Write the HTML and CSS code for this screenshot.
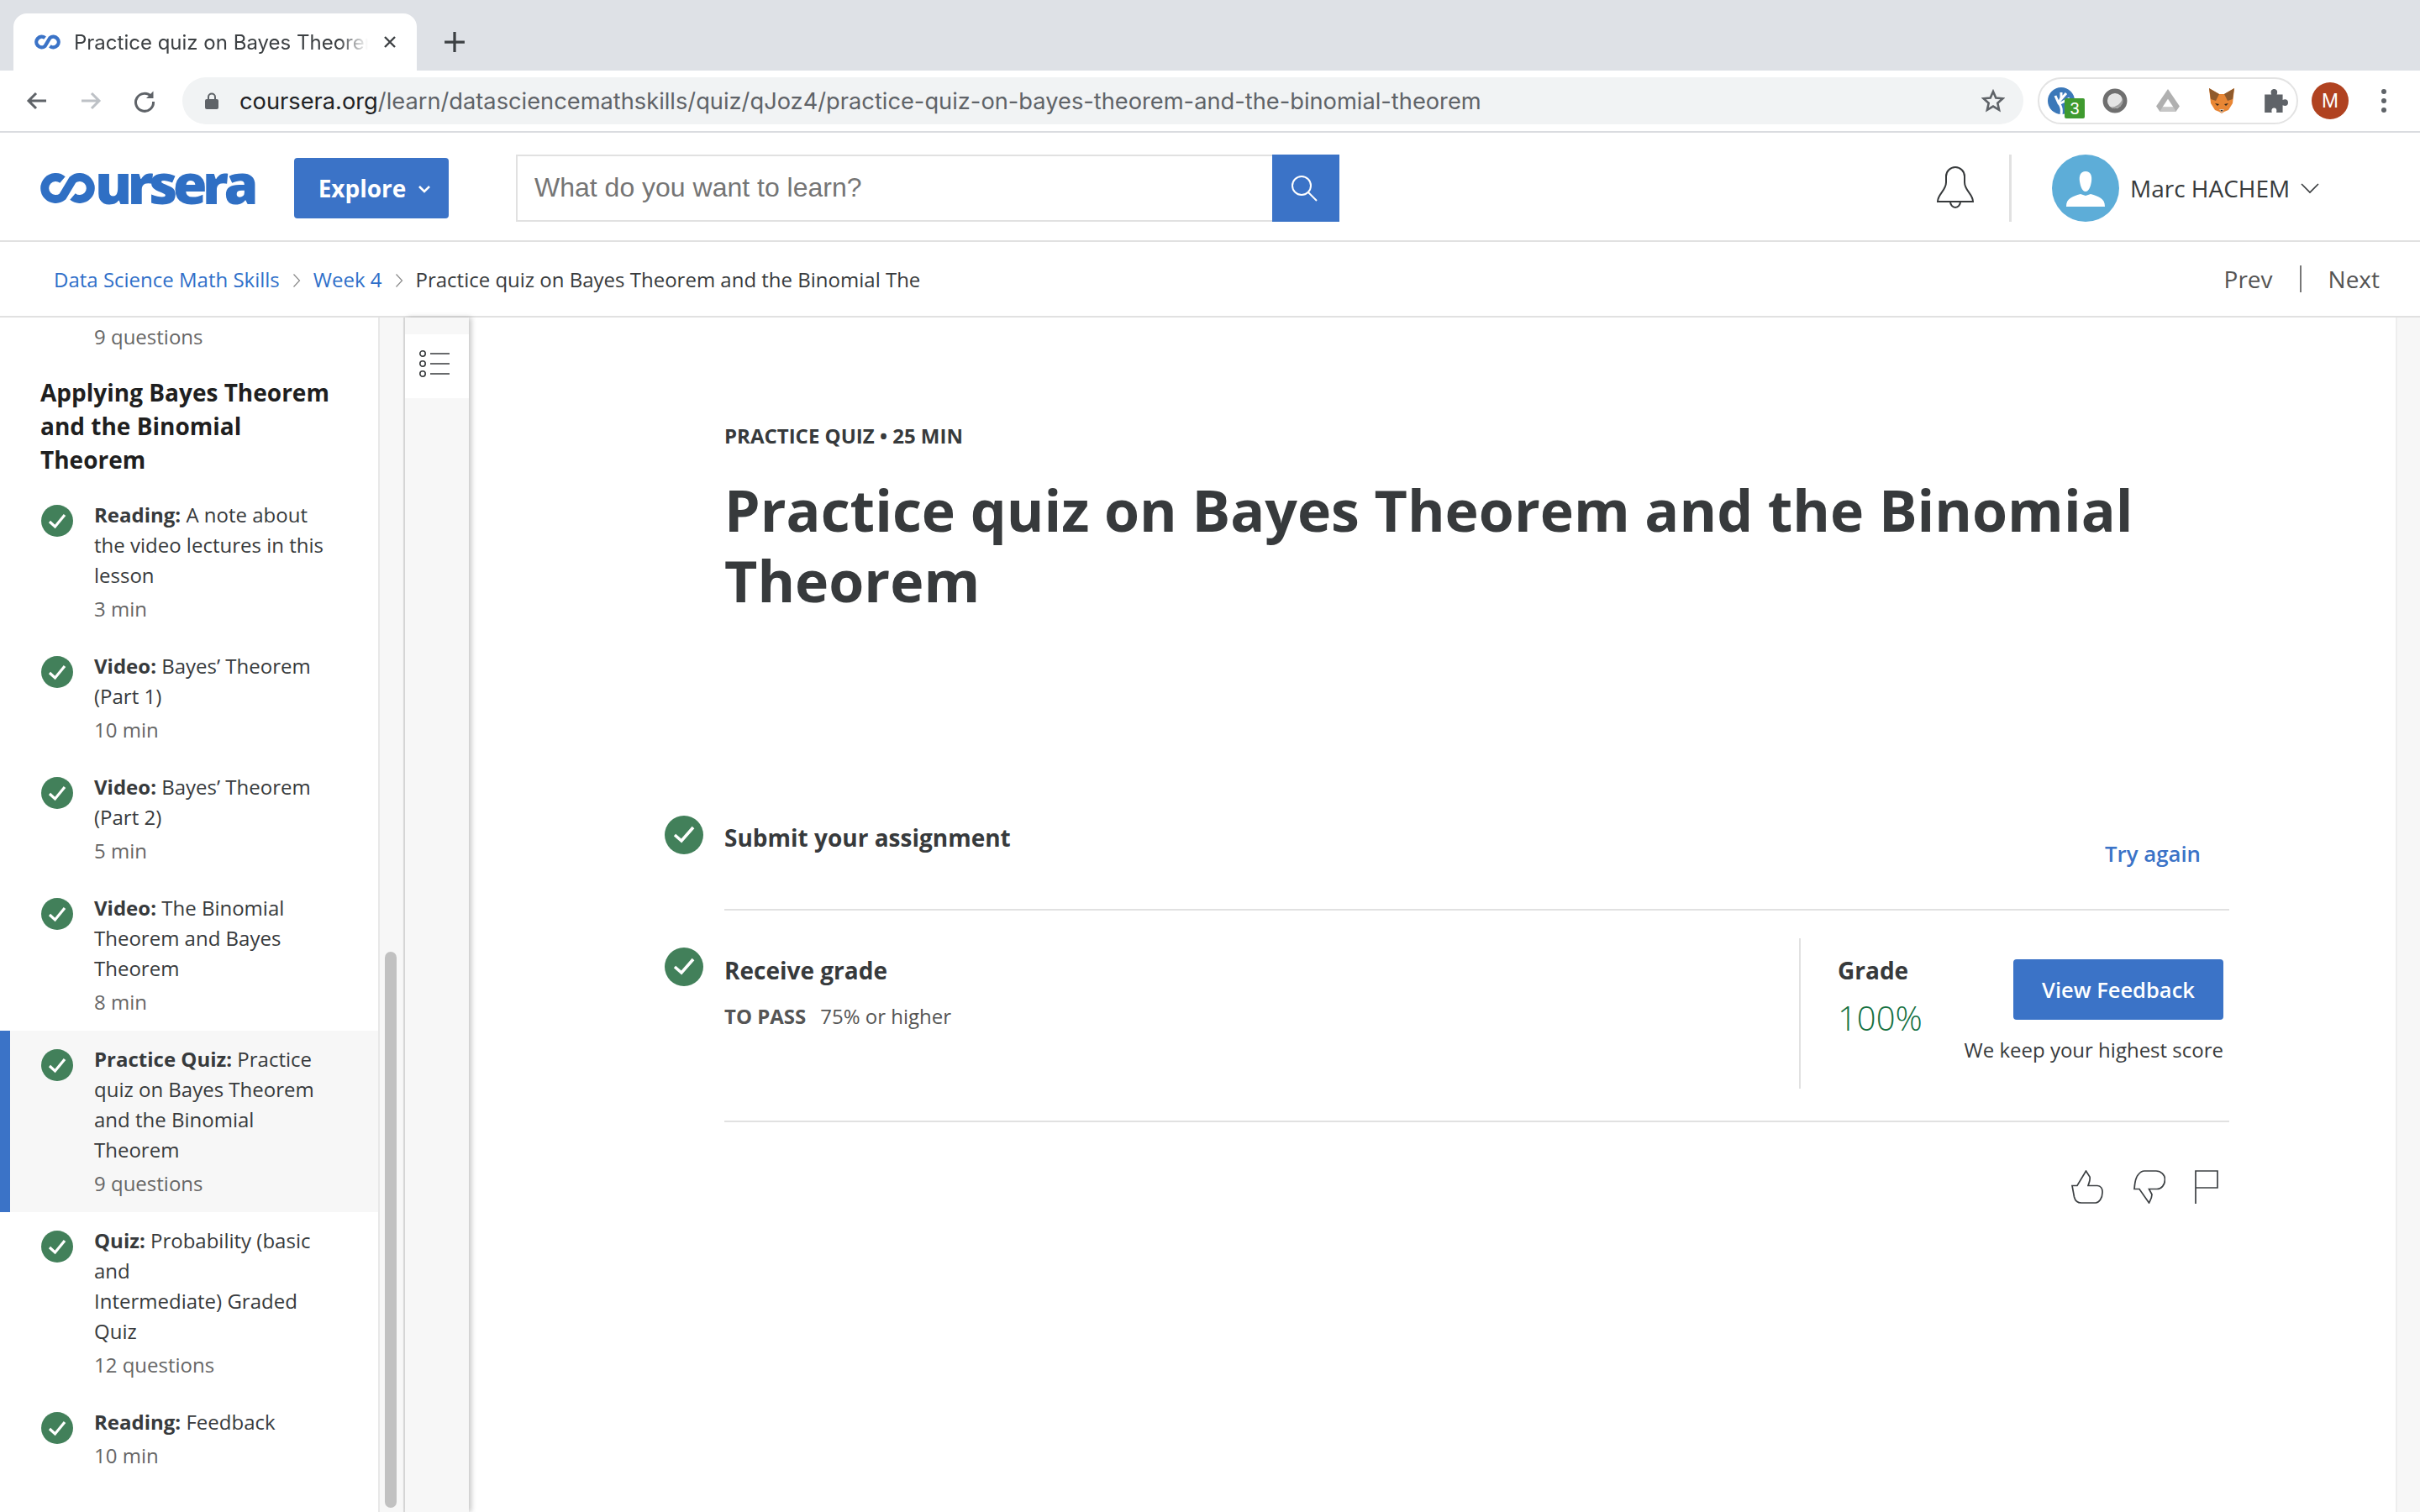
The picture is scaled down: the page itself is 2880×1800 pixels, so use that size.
FILE: index.html
```html
<!DOCTYPE html>
<html lang="en">
<head>
  <meta charset="UTF-8">
  <title>Practice quiz on Bayes Theorem and the Binomial Theorem</title>
  <link rel="stylesheet" href="styles.css">
</head>
<body>
  <div class="tabstrip">
    <div class="tab">
      <svg class="favicon" viewBox="0 0 32 20"><path d="M13 5A6.5 6.5 0 1 0 13 15L19 5A6.5 6.5 0 1 1 19 15" fill="none" stroke="#3b73c7" stroke-width="4.4"/></svg>
      <span class="tab-title">Practice quiz on Bayes Theorem and the</span>
      <svg class="tab-close" viewBox="0 0 16 16"><path d="M2 2L14 14M14 2L2 14" stroke="#3c4043" stroke-width="2.4"/></svg>
    </div>
    <svg class="newtab" viewBox="0 0 24 24"><path d="M12 1V23M1 12H23" stroke="#3c4043" stroke-width="3"/></svg>
  </div>

  <div class="toolbar">
    <svg class="nav-icon" viewBox="0 0 28 28"><path d="M25 14H4M13 5L4 14L13 23" fill="none" stroke="#5f6368" stroke-width="3"/></svg>
    <svg class="nav-icon" viewBox="0 0 28 28"><path d="M3 14H24M15 5L24 14L15 23" fill="none" stroke="#bdc1c6" stroke-width="3"/></svg>
    <svg class="nav-icon" viewBox="0 0 28 28"><path d="M22 9A10.5 10.5 0 1 0 24.5 15" fill="none" stroke="#5f6368" stroke-width="3"/><path d="M24.5 2.5V11H16Z" fill="#5f6368"/></svg>
    <div class="omnibox">
      <svg class="lock" viewBox="0 0 16 20"><path d="M4 8V5.5A4 4 0 0 1 12 5.5V8" fill="none" stroke="#5f6368" stroke-width="2"/><rect x="0" y="8" width="16" height="12" rx="2" fill="#5f6368"/></svg>
      <span class="url"><span class="url-host">coursera.org</span>/learn/datasciencemathskills/quiz/qJoz4/practice-quiz-on-bayes-theorem-and-the-binomial-theorem</span>
      <svg class="star" viewBox="0 0 28 28"><path d="M14 3L17.3 10.6L25.5 11.3L19.3 16.8L21.1 24.8L14 20.6L6.9 24.8L8.7 16.8L2.5 11.3L10.7 10.6Z" fill="none" stroke="#5f6368" stroke-width="2.6"/></svg>
    </div>
    <div class="extensions">
      <div class="ext ext-tree">
        <svg viewBox="0 0 32 32"><circle cx="16" cy="16" r="16" fill="#3b78b9"/><path d="M16 32C17 26 16 22 13 19L9 10M13 19L16 12L16 6M15 15L22 7M15 19L26 13" stroke="#fff" stroke-width="3" fill="none"/></svg>
        <span class="ext-badge">3</span>
      </div>
      <div class="ext">
        <svg viewBox="0 0 28 28"><circle cx="14" cy="14" r="11" fill="#e4e4e4" stroke="#6f6f6f" stroke-width="5"/><path d="M9 21A9 9 0 0 0 22.5 11A13 13 0 0 1 9 21Z" fill="#a0a0a0"/></svg>
      </div>
      <div class="ext">
        <svg viewBox="0 0 28 28"><path d="M14 1L27 20L23 26H5L1 20Z" fill="#b0b0b0"/><path d="M14 12L20 21H8Z" fill="#fff"/><path d="M8 21H20L23 26H5Z" fill="#c6c6c6"/></svg>
      </div>
      <div class="ext ext-fox">
        <svg viewBox="0 0 32 32"><path d="M1 1L13 8H19L31 1L29 19L24 27L19 29L16 31L13 29L8 27L3 19Z" fill="#e88634"/><path d="M1 1L13 8L9 16L3 14ZM31 1L19 8L23 16L29 14Z" fill="#8f5a2c"/><path d="M13 26H19L16 31Z" fill="#d9c3ae"/><path d="M14.5 27H17.5L16 29Z" fill="#222"/><path d="M8 19L13 20L11 22ZM24 19L19 20L21 22Z" fill="#3a2a1c"/></svg>
      </div>
      <div class="ext">
        <svg viewBox="0 0 28 28"><path d="M2 7H9.5C8 3 10 1 12.5 1S17 3 15.5 7H22V13C26 11.5 28 13.5 28 16S26 20.500 22 19V27H15C16 23 14 22 12.500 22S9 23 10 27H2Z" fill="#5f6368"/></svg>
      </div>
    </div>
    <div class="profile-m">M</div>
    <div class="chrome-menu"><i></i><i></i><i></i></div>
  </div>

  <header class="site-header">
    <div class="logo">
      <svg class="logo-co" viewBox="0 0 65 36"><path d="M26.500 8A13 13 0 1 0 26.500 28L38.500 8A13 13 0 1 1 38.500 28" fill="none" stroke="#2f6fc4" stroke-width="10"/></svg>
      <span class="logo-rest">ursera</span>
    </div>
    <button class="explore">Explore <svg viewBox="0 0 16 10"><path d="M2 2L8 8L14 2" fill="none" stroke="#fff" stroke-width="2.6"/></svg></button>
    <div class="search">
      <div class="search-input">What do you want to learn?</div>
      <div class="search-btn"><svg viewBox="0 0 34 34"><circle cx="14" cy="14" r="11" fill="none" stroke="#fff" stroke-width="2"/><path d="M22 22L32 32" stroke="#fff" stroke-width="2"/></svg></div>
    </div>
    <svg class="bell" viewBox="0 0 46 54"><path d="M2 43C2 34 12 30 12 20V13A11 11 0 0 1 34 13V20C34 30 44 34 44 43ZM17 43A6 7 0 0 0 29 43" fill="none" stroke="#373a3c" stroke-width="2"/></svg>
    <div class="header-divider"></div>
    <div class="user-avatar"><svg viewBox="0 0 80 80"><path d="M40 20C46 20 48 25 47 32C46 38 44 44 40 44C36 44 34 38 33 32C32 25 34 20 40 20ZM17 62C17 52 24 50 34 47L40 49L46 47C56 50 63 52 63 62Z" fill="#fff"/></svg></div>
    <span class="user-name">Marc HACHEM</span>
    <svg class="user-chevron" viewBox="0 0 24 14"><path d="M2 2L12 12L22 2" fill="none" stroke="#373a3c" stroke-width="1.6"/></svg>
  </header>

  <nav class="crumbs">
    <a class="crumb-link">Data Science Math Skills</a>
    <svg class="crumb-sep" viewBox="0 0 10 18"><path d="M1.5 1.5L8.5 9L1.5 16.5" fill="none" stroke="#8a8a8a" stroke-width="1.2"/></svg>
    <a class="crumb-link">Week 4</a>
    <svg class="crumb-sep" viewBox="0 0 10 18"><path d="M1.5 1.5L8.5 9L1.5 16.5" fill="none" stroke="#8a8a8a" stroke-width="1.2"/></svg>
    <span class="crumb-current">Practice quiz on Bayes Theorem and the Binomial The</span>
    <div class="pager">
      <span>Prev</span>
      <i class="pager-sep"></i>
      <span>Next</span>
    </div>
  </nav>

  <div class="learn">
    <aside class="sidebar">
      <div class="meta meta-top">9 questions</div>
      <h3 class="lesson-title">Applying Bayes Theorem and the Binomial Theorem</h3>

      <div class="item">
        <svg class="check" viewBox="0 0 38 38"><circle cx="19" cy="19" r="19" fill="#42805a"/><path d="M10 20L16.5 26L28 12" fill="none" stroke="#fff" stroke-width="3.2"/></svg>
        <div class="item-text"><b>Reading:</b> A note about the video lectures in this lesson<div class="meta">3 min</div></div>
      </div>
      <div class="item">
        <svg class="check" viewBox="0 0 38 38"><circle cx="19" cy="19" r="19" fill="#42805a"/><path d="M10 20L16.5 26L28 12" fill="none" stroke="#fff" stroke-width="3.2"/></svg>
        <div class="item-text"><b>Video:</b> Bayes’ Theorem (Part 1)<div class="meta">10 min</div></div>
      </div>
      <div class="item">
        <svg class="check" viewBox="0 0 38 38"><circle cx="19" cy="19" r="19" fill="#42805a"/><path d="M10 20L16.5 26L28 12" fill="none" stroke="#fff" stroke-width="3.2"/></svg>
        <div class="item-text"><b>Video:</b> Bayes’ Theorem (Part 2)<div class="meta">5 min</div></div>
      </div>
      <div class="item">
        <svg class="check" viewBox="0 0 38 38"><circle cx="19" cy="19" r="19" fill="#42805a"/><path d="M10 20L16.5 26L28 12" fill="none" stroke="#fff" stroke-width="3.2"/></svg>
        <div class="item-text"><b>Video:</b> The Binomial Theorem and Bayes Theorem<div class="meta">8 min</div></div>
      </div>
      <div class="item item-active">
        <svg class="check" viewBox="0 0 38 38"><circle cx="19" cy="19" r="19" fill="#42805a"/><path d="M10 20L16.5 26L28 12" fill="none" stroke="#fff" stroke-width="3.2"/></svg>
        <div class="item-text"><b>Practice Quiz:</b> Practice quiz on Bayes Theorem and the Binomial Theorem<div class="meta">9 questions</div></div>
      </div>
      <div class="item">
        <svg class="check" viewBox="0 0 38 38"><circle cx="19" cy="19" r="19" fill="#42805a"/><path d="M10 20L16.5 26L28 12" fill="none" stroke="#fff" stroke-width="3.2"/></svg>
        <div class="item-text"><b>Quiz:</b> Probability (basic and<br>Intermediate) Graded Quiz<div class="meta">12 questions</div></div>
      </div>
      <div class="item">
        <svg class="check" viewBox="0 0 38 38"><circle cx="19" cy="19" r="19" fill="#42805a"/><path d="M10 20L16.5 26L28 12" fill="none" stroke="#fff" stroke-width="3.2"/></svg>
        <div class="item-text"><b>Reading:</b> Feedback<div class="meta">10 min</div></div>
      </div>
    </aside>

    <div class="side-scroll"><div class="side-thumb"></div></div>

    <div class="rail">
      <div class="rail-btn">
        <svg viewBox="0 0 36 32"><g fill="none" stroke="#373a3c" stroke-width="1.6"><circle cx="4" cy="4" r="3.2"/><circle cx="4" cy="16" r="3.2"/><circle cx="4" cy="28" r="3.2"/><path d="M13 4H36M13 16H36M13 28H36"/></g></svg>
      </div>
    </div>

    <main class="content">
      <div class="eyebrow">PRACTICE QUIZ • 25 MIN</div>
      <h1 class="quiz-title">Practice quiz on Bayes Theorem and the Binomial Theorem</h1>

      <div class="steps">
        <div class="step">
          <svg class="step-check" viewBox="0 0 46 46"><circle cx="23" cy="23" r="23" fill="#42805a"/><path d="M12 23L20 30L34 14" fill="none" stroke="#fff" stroke-width="3.6"/></svg>
          <div class="step-body step-submit">
            <div class="step-title">Submit your assignment</div>
            <a class="try-again">Try again</a>
          </div>
        </div>
        <div class="step">
          <svg class="step-check step-check-grade" viewBox="0 0 46 46"><circle cx="23" cy="23" r="23" fill="#42805a"/><path d="M12 23L20 30L34 14" fill="none" stroke="#fff" stroke-width="3.6"/></svg>
          <div class="step-body step-grade">
            <div class="grade-left">
              <div class="step-title">Receive grade</div>
              <div class="pass"><b>TO PASS</b><span>75% or higher</span></div>
            </div>
            <div class="grade-box">
              <div class="grade-col">
                <div class="step-title">Grade</div>
                <div class="grade-value">100%</div>
              </div>
              <div class="feedback-col">
                <button class="view-feedback">View Feedback</button>
                <div class="keep">We keep your highest score</div>
              </div>
            </div>
          </div>
        </div>
      </div>

      <div class="rating">
        <svg class="thumb-up" viewBox="0 0 38 40"><path d="M1 18.500H7L17.500 1L22 8C23 12 21 15 20 18.500H31C35 18.500 37.500 22 37 27C37 33 33 39 29 39H12C7 39 4.500 36 3.500 32Z" fill="none" stroke="#3c4043" stroke-width="1.7"/></svg>
        <svg class="thumb-down" viewBox="0 0 38 40"><path d="M1 22.500C1.500 15 3 8 6 5C8 2.500 10 1 13 1H27C33 1 37.500 6 37.500 11C37.500 18 33 22.500 28 22.500H18.500L22 29C22 33 20 36 18.500 39L7 22.500Z" fill="none" stroke="#3c4043" stroke-width="1.7"/></svg>
        <svg class="flag" viewBox="0 0 28 40"><path d="M1 40V1H27V21H1" fill="none" stroke="#3c4043" stroke-width="1.7"/></svg>
      </div>
    </main>

    <div class="page-scroll"></div>
  </div>
</body>
</html>
```

FILE: styles.css
```css
* {
  box-sizing: border-box;
}
body {
  margin: 0;
  width: 2880px;
  height: 1800px;
  overflow: hidden;
  background: white;
  font-family: "Open Sans", sans-serif;
  color: #373a3c;
  display: flex;
  flex-direction: column;
}
svg {
  display: block;
  flex: none;
}

/* browser chrome */
.tabstrip {
  height: 84px;
  background: #dee1e6;
  padding: 16px 0 0 16px;
  display: flex;
}
.tab {
  width: 480px;
  height: 68px;
  background: white;
  border-radius: 16px 16px 0 0;
  display: flex;
  align-items: center;
  padding: 0 20px 0 25px;
}
.favicon {
  width: 31px;
  height: 20px;
}
.tab-title {
  font-family: Inter, sans-serif;
  font-size: 24px;
  color: #3c4043;
  white-space: nowrap;
  overflow: hidden;
  width: 350px;
  margin-left: 16px;
  -webkit-mask-image: linear-gradient(to right, black 90%, transparent);
  mask-image: linear-gradient(to right, black 90%, transparent);
}
.tab-close {
  width: 16px;
  height: 16px;
  margin-left: 18px;
}
.newtab {
  width: 26px;
  height: 26px;
  margin: 21px 0 0 32px;
}
.toolbar {
  height: 74px;
  border-bottom: 2px solid #dadce0;
  display: flex;
  align-items: center;
  padding-left: 30px;
}
.nav-icon {
  width: 28px;
  height: 28px;
  margin-right: 36px;
}
.omnibox {
  width: 2191px;
  height: 56px;
  margin-left: -5px;
  background: #f1f3f4;
  border-radius: 28px;
  display: flex;
  align-items: center;
  padding-left: 27px;
}
.lock {
  width: 16px;
  height: 20px;
}
.url {
  font-family: Inter, sans-serif;
  font-size: 27.25px;
  color: #5f6368;
  margin-left: 25px;
  white-space: nowrap;
}
.url-host {
  color: #202124;
}
.star {
  width: 28px;
  height: 28px;
  margin-left: auto;
  margin-right: 22px;
}
.extensions {
  width: 310px;
  height: 56px;
  margin-left: 17px;
  border: 2px solid #e3e3e3;
  border-radius: 28px;
  display: flex;
  align-items: center;
  padding-left: 10px;
}
.ext {
  width: 32px;
  height: 32px;
  margin-right: 33px;
  position: relative;
  display: flex;
  align-items: center;
  justify-content: center;
}
.ext svg {
  width: 30px;
  height: 30px;
}
.ext-tree svg,
.ext-fox svg {
  width: 32px;
  height: 32px;
}
.ext-badge {
  position: absolute;
  left: 20px;
  top: 13px;
  width: 24px;
  height: 24px;
  background: #3f9a2f;
  border-radius: 2px;
  color: white;
  font: 20px/24px "Liberation Sans", sans-serif;
  text-align: center;
}
.profile-m {
  width: 44px;
  height: 44px;
  margin-left: 16px;
  border-radius: 50%;
  background: #b04220;
  color: white;
  font: 24px/44px "Liberation Sans", sans-serif;
  text-align: center;
}
.chrome-menu {
  margin-left: 39px;
  display: flex;
  flex-direction: column;
  gap: 5px;
}
.chrome-menu i {
  width: 6px;
  height: 6px;
  border-radius: 50%;
  background: #5f6368;
}

/* coursera header */
.site-header {
  height: 130px;
  border-bottom: 2px solid #e1e1e1;
  display: flex;
  align-items: center;
  padding: 3px 0 0 48px;
}
.logo {
  width: 254px;
  display: flex;
  align-items: center;
  color: #2f6fc4;
}
.logo-co {
  width: 65px;
  height: 36px;
}
.logo-rest {
  font-weight: 800;
  font-size: 66px;
  line-height: 36px;
  letter-spacing: -5.5px;
  padding-bottom: 14px;
}
.explore {
  width: 184px;
  height: 72px;
  margin-left: 48px;
  padding: 0 0 0 8px;
  border: none;
  border-radius: 4px;
  background: #3b73c7;
  color: white;
  font: 700 28px "Open Sans", sans-serif;
  display: flex;
  align-items: center;
  justify-content: center;
  gap: 14px;
}
.explore svg {
  width: 16px;
  height: 10px;
  margin-top: 3px;
}
.search {
  width: 980px;
  height: 80px;
  margin-left: 80px;
  display: flex;
}
.search-input {
  flex: 1;
  border: 2px solid #e1e1e1;
  border-right: none;
  padding-left: 20px;
  font: 32px/74px "Liberation Sans", sans-serif;
  color: #757575;
}
.search-btn {
  width: 80px;
  background: #3b73c7;
  display: flex;
  align-items: center;
  justify-content: center;
}
.search-btn svg {
  width: 34px;
  height: 34px;
  margin-left: -4px;
}
.bell {
  width: 46px;
  height: 54px;
  margin-left: 710px;
}
.header-divider {
  width: 3px;
  height: 80px;
  margin-left: 41px;
  background: #e1e1e1;
}
.user-avatar {
  width: 80px;
  height: 80px;
  margin-left: 48px;
  border-radius: 50%;
  background: #5dadd8;
}
.user-name {
  font-size: 28px;
  margin-left: 13px;
  white-space: nowrap;
}
.user-chevron {
  width: 24px;
  height: 14px;
  margin-left: 12px;
}

/* breadcrumbs */
.crumbs {
  height: 90px;
  border-bottom: 2px solid #e1e1e1;
  display: flex;
  align-items: center;
  padding: 0 48px 0 64px;
  font-size: 24px;
  white-space: nowrap;
}
.crumb-link {
  color: #2f6fc9;
}
.crumb-sep {
  width: 10px;
  height: 18px;
  margin: 3px 15px 0;
}
.pager {
  margin-left: auto;
  display: flex;
  align-items: center;
  font-size: 28px;
  color: #545454;
}
.pager-sep {
  width: 2px;
  height: 32px;
  margin: 0 32px;
  background: #777;
}

/* layout under the bars */
.learn {
  flex: 1;
  min-height: 0;
  display: flex;
}
.sidebar {
  width: 452px;
  border-right: 2px solid #e8e8e8;
  overflow: hidden;
  font-size: 24px;
  line-height: 36px;
}
.meta {
  color: #666;
  margin-top: 4px;
}
.meta-top {
  margin: 5px 0 0 112px;
}
.lesson-title {
  margin: 29px 40px 12px 48px;
  font-size: 28px;
  line-height: 39.8px;
  font-weight: 700;
  color: #1f1f1f;
}
.item {
  display: flex;
  padding: 16px 0 16px 49px;
}
.item-active {
  background: #f7f7f7;
  border-left: 12px solid #3b73c7;
  padding-left: 37px;
}
.check {
  width: 38px;
  height: 38px;
  margin: 6px 25px 0 0;
}
.item-text {
  width: 296px;
}
.side-scroll {
  width: 30px;
  background: #f7f7f7;
  padding: 755px 8px 5px 6px;
  border-right: 2px solid #dcdcdc;
  display: flex;
}
.side-thumb {
  flex: 1;
  background: #c1c1c1;
  border-radius: 8px;
}
.rail {
  width: 76px;
  background: #f7f7f7;
  padding-top: 20px;
  box-shadow: 3px 0 6px rgba(0, 0, 0, 0.22);
}
.rail-btn {
  height: 76px;
  background: white;
  padding: 19px 0 0 17px;
}
.rail-btn svg {
  width: 36px;
  height: 32px;
}

/* main column */
.content {
  flex: 1;
  padding: 125px 0 0 304px;
  min-width: 0;
}
.eyebrow {
  font-size: 24px;
  line-height: 32px;
  font-weight: 700;
}
.quiz-title {
  margin: 30px 0 0;
  width: 1791px;
  font-size: 68px;
  line-height: 84px;
  font-weight: 700;
}
.steps {
  margin: 238px 0 0 -71px;
}
.step {
  display: flex;
}
.step-check {
  width: 46px;
  height: 46px;
  margin-right: 25px;
}
.step-check-grade {
  margin-top: 44px;
}
.step-body {
  width: 1791px;
  border-bottom: 2px solid #e1e1e1;
}
.step-submit {
  height: 113px;
  display: flex;
  justify-content: space-between;
  padding: 6px 34px 0 0;
}
.step-title {
  font-size: 28px;
  line-height: 40px;
  font-weight: 700;
}
.try-again {
  margin-top: 21px;
  font-size: 25.8px;
  line-height: 36px;
  font-weight: 600;
  color: #3b73c7;
}
.step-grade {
  height: 252px;
  display: flex;
  justify-content: space-between;
  padding-right: 7px;
}
.grade-left {
  padding-top: 51px;
}
.pass {
  margin-top: 17px;
  font-size: 24px;
  line-height: 36px;
  color: #555;
  display: flex;
  gap: 17px;
}
.grade-box {
  width: 505px;
  height: 179px;
  margin-top: 33px;
  border-left: 2px solid #e1e1e1;
  padding-left: 44px;
  display: flex;
  justify-content: space-between;
}
.grade-col {
  padding-top: 18px;
}
.grade-value {
  margin-top: 9px;
  font-size: 40px;
  line-height: 56px;
  font-weight: 300;
  color: #14703f;
}
.feedback-col {
  padding-top: 25px;
  display: flex;
  flex-direction: column;
  align-items: flex-end;
}
.view-feedback {
  width: 250px;
  height: 72px;
  border: none;
  border-radius: 4px;
  background: #3b73c7;
  color: white;
  font: 600 25.5px "Open Sans", sans-serif;
}
.keep {
  margin-top: 18px;
  font-size: 24px;
  line-height: 36px;
  white-space: nowrap;
}
.rating {
  width: 1791px;
  margin-top: 57px;
  padding-right: 13px;
  display: flex;
  justify-content: flex-end;
}
.thumb-up,
.thumb-down {
  width: 38px;
  height: 40px;
}
.thumb-down {
  margin: 0 35px 0 36px;
}
.flag {
  width: 28px;
  height: 40px;
}
.page-scroll {
  width: 29px;
  background: #f7f7f7;
  border-left: 2px solid #eeeeee;
}
```
